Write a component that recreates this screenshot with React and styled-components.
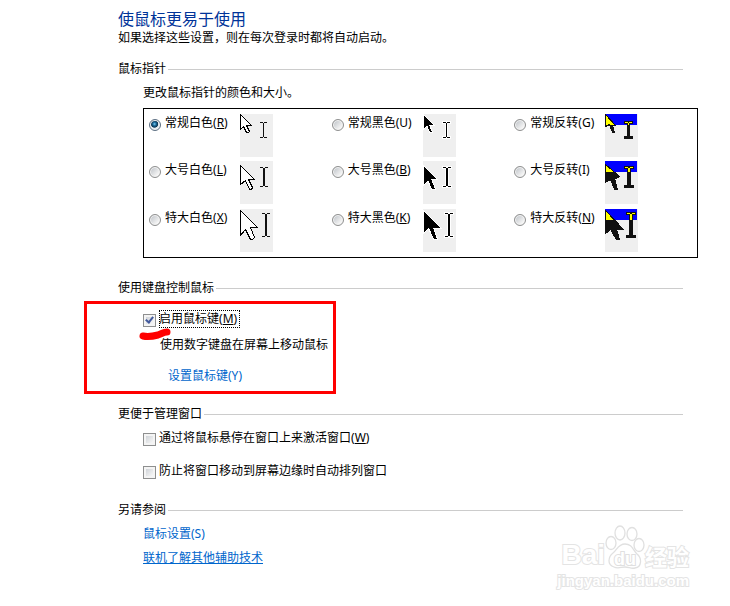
import React, { useState } from "react";
import styled, { createGlobalStyle } from "styled-components";

const POINTERS = [
  { id: "r", text: "常规白色", hotkey: "R", underline: true, tone: "white", size: 0 },
  { id: "u", text: "常规黑色", hotkey: "U", tone: "black", size: 0 },
  { id: "g", text: "常规反转", hotkey: "G", tone: "invert", size: 0 },
  { id: "l", text: "大号白色", hotkey: "L", underline: true, tone: "white", size: 1 },
  { id: "b", text: "大号黑色", hotkey: "B", underline: true, tone: "black", size: 1 },
  { id: "i", text: "大号反转", hotkey: "I", tone: "invert", size: 1 },
  { id: "x", text: "特大白色", hotkey: "X", underline: true, tone: "white", size: 2 },
  { id: "k", text: "特大黑色", hotkey: "K", underline: true, tone: "black", size: 2 },
  { id: "n", text: "特大反转", hotkey: "N", underline: true, tone: "invert", size: 2 },
];

// arrow shapes for the three pointer sizes
const ARROWS = {
  white: [
    "M0.5 0.5V15.5L3.5 12.5L6.5 18.5H8.5L9.5 17.5L6.5 11.5H11.5Z",
    "M0.5 4.5V23.5L5.5 19.5L9.5 28.5H11.5L12.5 26.5L8.5 18.5H14.5Z",
    "M0.5 1.5V26.5L5.5 20.5L10.5 30.5H12.5L14.5 28.5L10.5 18.5H17.5Z",
  ],
  black: [
    "M1 2V14L4 11L7 18H9L6 11H10Z",
    "M1 6V23L5 19L9 28H12L8 18H13Z",
    "M1 3V23L6 19L11 30H14L10 19H17Z",
  ],
  invert: [
    "M0.5 0.5V12.5L4.5 10.5L7.5 18.5H9.5L7.5 11.5H10.5Z",
    "M0.5 3.5V21.5L5.5 18.5L9.5 28.5H12.5L9.5 17.5H10.5L14.5 15.5Z",
    "M0.5 1.5V24.5L5.5 20.5L11.5 30.5H14.5L11.5 20.5H18.5Z",
  ],
};

const BEAMS = [
  { x: 23, top: 8, bottom: 24, w: 1 },
  { x: 23, top: 6, bottom: 26, w: 2 },
  { x: 25, top: 4, bottom: 28, w: 2 },
];

function beamPath({ x, top, bottom, w }) {
  const bar = (y) => `M${x - 3} ${y}h3v1h-3zM${x + w} ${y}h3v1h-3z`;
  return `${bar(top)}${bar(bottom - 1)}M${x} ${top + 1}h${w}V${bottom - 1}h-${w}z`;
}

function PointerPreview({ tone, size }) {
  const arrow = ARROWS[tone][size];
  const beam = beamPath(BEAMS[size]);

  return (
    <Preview viewBox="0 0 33 43" shapeRendering="crispEdges" aria-hidden="true">
      <rect width="33" height="43" fill="#efefef" />
      {tone === "white" && (
        <>
          <path d={arrow} fill="#fff" stroke="#000" />
          <path d={beam} fill="#111" />
        </>
      )}
      {tone === "black" && (
        <>
          <path d={arrow} fill="#000" stroke="#fff" strokeWidth="2" />
          <path d={arrow} fill="#000" />
          <path d={beam} fill="#000" stroke="#fff" strokeWidth="2" />
          <path d={beam} fill="#000" />
        </>
      )}
      {tone === "invert" && (
        <>
          <rect width="32" height="11" fill="#00f" />
          <path d={arrow} fill="#111" stroke="#111" />
          <path d={beam} fill="#111" stroke="#111" strokeWidth="2" />
          <svg width="33" height="11">
            <path d={arrow} fill="#ff0" stroke="#111" />
            <path d={beam} fill="#ff0" />
          </svg>
        </>
      )}
    </Preview>
  );
}

function Hotkey({ char, underline }) {
  return <>({underline ? <u>{char}</u> : char})</>;
}

function Watermark() {
  return (
    <Mark aria-hidden="true">
      <MarkRow>
        <MarkText $size={28}>Bai</MarkText>
        <Paw viewBox="0 0 40 44">
          <g fill="#fff" stroke="#e0e0e0" strokeWidth="1.3">
            <ellipse cx="6" cy="18" rx="5" ry="6.5" />
            <ellipse cx="15" cy="8" rx="5" ry="7" />
            <ellipse cx="27" cy="9" rx="5" ry="6.5" />
            <ellipse cx="34" cy="20" rx="5" ry="6.5" />
            <path d="M20 19C27 19 28 25 32 29C37 33 37 42 30 43C26 44 24 42 20 42C16 42 13 44 9 42C2 40 3 32 8 28C12 25 13 19 20 19Z" />
            <text x="20" y="40" textAnchor="middle" fontSize="18" fontWeight="700" strokeWidth="2">
              du
            </text>
          </g>
        </Paw>
        <MarkText $size={22}>经验</MarkText>
      </MarkRow>
      <MarkText $size={15}>jingyan.baidu.com</MarkText>
    </Mark>
  );
}

function App() {
  const [pointer, setPointer] = useState("r");
  const [mouseKeys, setMouseKeys] = useState(true);
  const [hoverActivate, setHoverActivate] = useState(false);
  const [noSnap, setNoSnap] = useState(false);

  return (
    <>
      <GlobalStyle />
      <Page>
        <Title>使鼠标更易于使用</Title>
        <Text>如果选择这些设置，则在每次登录时都将自动启动。</Text>

        <Section $top={13}>
          <Heading>鼠标指针</Heading>
          <SectionBody>
            <Text id="pointer-caption">更改鼠标指针的颜色和大小。</Text>
            <PointerGrid role="radiogroup" aria-labelledby="pointer-caption">
              {POINTERS.map((p) => (
                <Option key={p.id}>
                  <Radio
                    type="radio"
                    name="pointer"
                    checked={pointer === p.id}
                    onChange={() => setPointer(p.id)}
                  />
                  <OptionText>
                    {p.text}
                    <Hotkey char={p.hotkey} underline={p.underline} />
                  </OptionText>
                  <PointerPreview tone={p.tone} size={p.size} />
                </Option>
              ))}
            </PointerGrid>
          </SectionBody>
        </Section>

        <Section $top={21}>
          <Heading>使用键盘控制鼠标</Heading>
          <SectionBody $top={13} $gap={8}>
            <CheckRow>
              <Checkbox
                type="checkbox"
                checked={mouseKeys}
                onChange={(e) => setMouseKeys(e.target.checked)}
              />
              <CheckText $focused>
                启用鼠标键
                <Hotkey char="M" underline />
              </CheckText>
            </CheckRow>
            <Description>使用数字键盘在屏幕上移动鼠标</Description>
            <NestedLink href="#mouse-keys">设置鼠标键(Y)</NestedLink>
            <RedFrame />
            <RedStroke viewBox="0 0 34 14" aria-hidden="true">
              <path d="M5 9C10 10 16 9 20 8C23 7 26 5 29 5" />
            </RedStroke>
          </SectionBody>
        </Section>

        <Section $top={20}>
          <Heading>更便于管理窗口</Heading>
          <SectionBody $gap={15}>
            <CheckRow>
              <Checkbox
                type="checkbox"
                checked={hoverActivate}
                onChange={(e) => setHoverActivate(e.target.checked)}
              />
              <CheckText>
                通过将鼠标悬停在窗口上来激活窗口
                <Hotkey char="W" underline />
              </CheckText>
            </CheckRow>
            <CheckRow>
              <Checkbox
                type="checkbox"
                checked={noSnap}
                onChange={(e) => setNoSnap(e.target.checked)}
              />
              <CheckText>防止将窗口移动到屏幕边缘时自动排列窗口</CheckText>
            </CheckRow>
          </SectionBody>
        </Section>

        <Section $top={21}>
          <Heading>另请参阅</Heading>
          <SectionBody>
            <Link href="#mouse-settings">鼠标设置(S)</Link>
            <Link href="#assistive" $underline>
              联机了解其他辅助技术
            </Link>
          </SectionBody>
        </Section>

        <Watermark />
      </Page>
    </>
  );
}

export default App;

const GlobalStyle = createGlobalStyle`
  * {
    box-sizing: border-box;
  }
  body {
    margin: 0;
    background: #fff;
    color: #000;
    font-family: "Noto Sans", "Noto Sans CJK SC", sans-serif;
    font-size: 12px;
    line-height: 18px;
  }
`;

const Page = styled.main`
  position: relative;
  min-height: 100vh;
  padding: 9px 47px 16px 118px;
`;

const Title = styled.h1`
  margin: 0;
  color: #003399;
  font-size: 16px;
  font-weight: 400;
  line-height: 20px;
`;

const Text = styled.p`
  margin: 0;
`;

const Section = styled.section`
  margin-top: ${(props) => props.$top}px;
`;

const Heading = styled.h2`
  display: flex;
  align-items: center;
  gap: 2px;
  margin: 0;
  font-size: 12px;
  font-weight: 400;

  &::after {
    content: "";
    flex: 1;
    height: 1px;
    background: #ccc;
  }
`;

const SectionBody = styled.div`
  position: relative;
  display: flex;
  flex-direction: column;
  align-items: flex-start;
  gap: ${(props) => props.$gap || 6}px;
  padding: ${(props) => props.$top || 6}px 0 0 25px;
`;

const PointerGrid = styled.div`
  display: grid;
  grid-template-columns: repeat(3, 1fr);
  grid-template-rows: 47px 48px 43px;
  align-self: stretch;
  margin-right: -15px;
  padding: 5px 0 5px 5px;
  border: 1px solid #000;
`;

const Option = styled.label`
  display: flex;
  align-items: flex-start;
`;

const OptionText = styled.span`
  width: 75px;
  white-space: nowrap;
`;

const Preview = styled.svg`
  width: 33px;
  height: 43px;
`;

const Radio = styled.input`
  appearance: none;
  flex: none;
  width: 12px;
  height: 12px;
  margin: 5px 4px 0 0;
  border: 1px solid #8e8f8f;
  border-radius: 50%;
  background: linear-gradient(135deg, #b9bec4, #f4f4f4 75%);
  box-shadow: inset 0 0 0 1px #f4f4f4;

  &:checked {
    border-color: #5c6f82;
    background: radial-gradient(circle at 45% 40%, #7fd0f5 0, #1b6c9c 20%, #0b3350 40%, #e4eaee 50%);
  }
`;

const CheckRow = styled.label`
  display: flex;
  align-items: center;
  gap: 3px;
`;

const Checkbox = styled.input`
  appearance: none;
  flex: none;
  display: grid;
  place-items: center;
  width: 13px;
  height: 13px;
  margin: 2px 0 0;
  border: 1px solid #8e8f8f;
  background: linear-gradient(135deg, #c4c9cf, #f6f6f6 80%);
  box-shadow: inset 0 0 0 2px #f4f4f4;

  &:checked::after {
    content: "";
    width: 3px;
    height: 6px;
    margin-bottom: 2px;
    border: solid #42599c;
    border-width: 0 2px 2px 0;
    transform: rotate(38deg);
  }
`;

const CheckText = styled.span`
  outline: ${(props) => (props.$focused ? "1px dotted #000" : "none")};
  outline-offset: -1px;
  padding-right: 3px;
`;

const Description = styled.p`
  margin: 0;
  padding-left: 17px;
`;

const Link = styled.a`
  color: #0066cc;
  text-decoration: ${(props) => (props.$underline ? "underline" : "none")};
`;

const NestedLink = styled(Link)`
  margin: 5px 0 0 25px;
`;

/* hand-drawn marks over the mouse keys group */
const RedFrame = styled.div`
  position: absolute;
  top: 4px;
  left: -34px;
  width: 252px;
  height: 93px;
  border: 3px solid #f00;
  pointer-events: none;
`;

const RedStroke = styled.svg`
  position: absolute;
  top: 30px;
  left: 20px;
  width: 34px;
  height: 14px;
  pointer-events: none;

  path {
    fill: none;
    stroke: #f00;
    stroke-width: 7;
    stroke-linecap: round;
  }
`;

const Mark = styled.div`
  position: absolute;
  right: 41px;
  bottom: 18px;
  display: flex;
  flex-direction: column;
  align-items: flex-end;
  gap: 4px;
  pointer-events: none;
`;

const MarkRow = styled.div`
  display: flex;
  align-items: flex-end;
`;

const MarkText = styled.span`
  color: #fff;
  font-family: "Liberation Sans", "Noto Sans CJK SC", sans-serif;
  font-size: ${(props) => props.$size}px;
  font-weight: 700;
  line-height: ${(props) => props.$size}px;
  -webkit-text-stroke: 2px #e4e4e4;
  paint-order: stroke fill;
`;

const Paw = styled.svg`
  width: 40px;
  height: 44px;
  font-family: "Liberation Sans", sans-serif;

  text {
    paint-order: stroke fill;
  }
`;
